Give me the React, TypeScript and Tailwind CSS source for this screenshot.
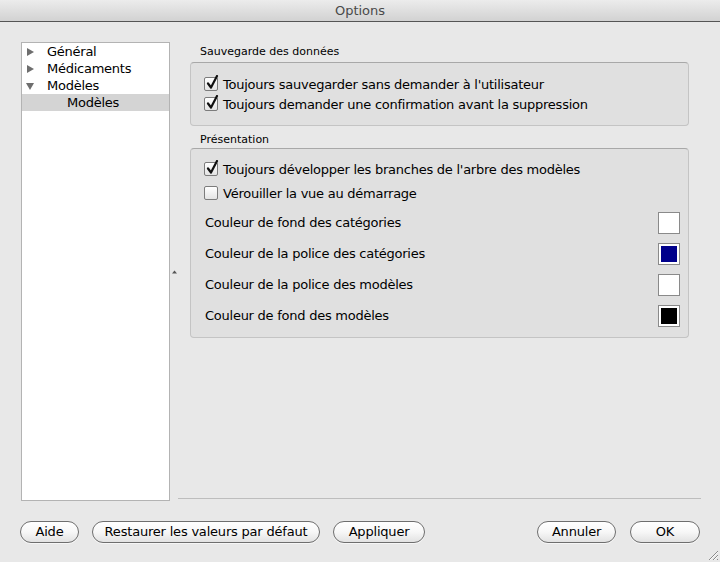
import React from "react";

const font = { fontFamily: '"DejaVu Sans", "Liberation Sans", sans-serif' };

function Check({ checked }: { checked: boolean }) {
  return (
    <span className="relative inline-block w-[14px] h-[14px] shrink-0 rounded-[2px] border border-[#7c7c7c] bg-gradient-to-b from-white to-[#e4e4e4]">
      {checked && (
        <svg className="absolute left-[1px] top-[-3px]" width="13" height="15" viewBox="0 0 13 15">
          <path d="M2 8.5 L5 12.5 L11 1" fill="none" stroke="#111" strokeWidth="2.2" strokeLinecap="round" strokeLinejoin="round" />
        </svg>
      )}
    </span>
  );
}

function CheckRow({ checked, label, className }: { checked: boolean; label: string; className?: string }) {
  return (
    <div className={"flex items-center h-[20px] gap-[5px] " + (className || "")}>
      <Check checked={checked} />
      <span className="text-[13px] tracking-[-0.25px] text-black leading-none">{label}</span>
    </div>
  );
}

function ColorRow({ label, color }: { label: string; color: string }) {
  return (
    <div className="flex items-center justify-between h-[31px] pl-[1px]">
      <span className="text-[13px] tracking-[-0.25px] text-black">{label}</span>
      <span className="w-[22px] h-[22px] border border-[#8a8a8a] bg-white p-[2px]">
        <span className="block w-full h-full" style={{ background: color }} />
      </span>
    </div>
  );
}

function Tri({ down }: { down?: boolean }) {
  return down ? (
    <svg width="10" height="10" viewBox="0 0 10 10" className="shrink-0">
      <path d="M1 2 L9 2 L5 9 Z" fill="#6e6e6e" />
    </svg>
  ) : (
    <svg width="10" height="10" viewBox="0 0 10 10" className="shrink-0">
      <path d="M2 1 L9 5 L2 9 Z" fill="#6e6e6e" />
    </svg>
  );
}

function Btn({ label, w }: { label: string; w: string }) {
  return (
    <div
      className={
        "h-[22px] rounded-full border border-[#6e6e6e] bg-gradient-to-b from-white via-[#f7f7f7] to-[#e2e2e2] flex items-center justify-center text-[13px] tracking-[-0.2px] text-black shadow-[0_1px_0_rgba(255,255,255,0.6)] " +
        w
      }
    >
      {label}
    </div>
  );
}

export default function App() {
  return (
    <div className="relative w-[720px] h-[562px] bg-[#e8e8e8] flex flex-col overflow-hidden" style={font}>
      <div className="h-[22px] shrink-0 bg-gradient-to-b from-[#ececec] to-[#d2d2d2] border-b border-[#555] flex items-center justify-center">
        <span className="text-[13px] text-[#4a4a4a]">Options</span>
      </div>

      <div className="flex pt-[20px]">
        <div className="ml-[21px] w-[149px] h-[459px] bg-white border border-[#b3b3b3] flex flex-col">
          <div className="flex items-center h-[17px] pl-[3px]">
            <Tri />
            <span className="ml-[12px] text-[13px] tracking-[-0.25px] text-black">Général</span>
          </div>
          <div className="flex items-center h-[17px] pl-[3px]">
            <Tri />
            <span className="ml-[12px] text-[13px] tracking-[-0.25px] text-black">Médicaments</span>
          </div>
          <div className="flex items-center h-[17px] pl-[3px]">
            <Tri down />
            <span className="ml-[12px] text-[13px] tracking-[-0.25px] text-black">Modèles</span>
          </div>
          <div className="flex items-center h-[17px] bg-[#d4d4d4] pl-[45px]">
            <span className="text-[13px] tracking-[-0.25px] text-black">Modèles</span>
          </div>
        </div>

        <div className="w-[8px] flex items-center justify-center">
          <svg width="5" height="4" viewBox="0 0 5 4">
            <path d="M0 3.5 L2.5 0.5 L5 3.5 Z" fill="#555" />
          </svg>
        </div>

        <div className="w-[523px] flex flex-col">
          <div className="ml-[22px] mt-[3px] text-[11px] leading-[14px] text-black">Sauvegarde des données</div>
          <div className="mx-[12px] mt-[3px] rounded-[4px] border border-[#c4c4c4] border-t-[#a8a8a8] bg-[#e0e0e0] pl-[13px] pt-[11px] pb-[11px]">
            <CheckRow checked label="Toujours sauvegarder sans demander à l'utilisateur" />
            <CheckRow checked label="Toujours demander une confirmation avant la suppression" />
          </div>

          <div className="ml-[22px] mt-[7px] text-[11px] leading-[14px] text-black">Présentation</div>
          <div className="mx-[12px] mt-[1px] rounded-[4px] border border-[#c4c4c4] border-t-[#a8a8a8] bg-[#e0e0e0] pl-[13px] pr-[8px] pt-[10px] pb-[6px]">
            <CheckRow checked label="Toujours développer les branches de l'arbre des modèles" />
            <CheckRow checked={false} label="Vérouiller la vue au démarrage" className="mt-[4px] mb-[4px]" />
            <ColorRow label="Couleur de fond des catégories" color="#ffffff" />
            <ColorRow label="Couleur de la police des catégories" color="#00008b" />
            <ColorRow label="Couleur de la police des modèles" color="#ffffff" />
            <ColorRow label="Couleur de fond des modèles" color="#000000" />
          </div>

          <div className="flex-1" />
          <div className="h-px bg-[#bdbdbd] mb-[2px]" />
        </div>
      </div>

      <div className="flex items-center mt-[20px] pl-[20px] pr-[20px]">
        <div className="flex gap-[13px]">
          <Btn label="Aide" w="w-[59px]" />
          <Btn label="Restaurer les valeurs par défaut" w="w-[228px]" />
          <Btn label="Appliquer" w="w-[92px]" />
        </div>
        <div className="flex-1" />
        <div className="flex gap-[14px]">
          <Btn label="Annuler" w="w-[79px]" />
          <Btn label="OK" w="w-[70px]" />
        </div>
      </div>

      <svg className="absolute right-[1px] bottom-[1px]" width="12" height="12" viewBox="0 0 12 12">
        <path d="M11 2 L2 11 M11 6 L6 11 M11 10 L10 11" stroke="#8a8a8a" strokeWidth="1" />
        <path d="M11 3 L3 11 M11 7 L7 11" stroke="#ffffff" strokeWidth="1" opacity="0.8" />
      </svg>
    </div>
  );
}
